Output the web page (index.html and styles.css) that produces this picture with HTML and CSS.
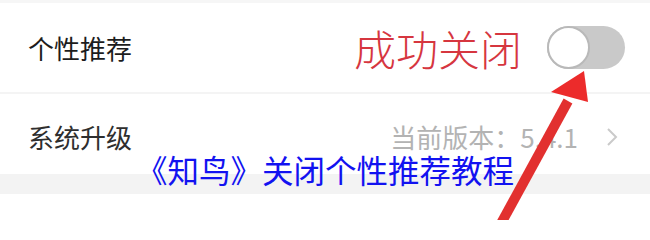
FILE: index.html
```html
<!DOCTYPE html>
<html lang="zh-CN">
<head>
<meta charset="utf-8">
<title>知鸟 关闭个性推荐</title>
<link rel="stylesheet" href="styles.css">
</head>
<body>
<div class="screen">
  <div class="row row-first">
    <span class="label">个性推荐</span>
    <div class="right">
      <span class="note">成功关闭</span>
      <span class="toggle"><span class="knob"></span></span>
    </div>
  </div>
  <div class="row row-second">
    <span class="label label-2">系统升级</span>
    <div class="right right-2">
      <span class="version">当前版本：5.4.1</span>
      <svg class="chevron" width="12" height="20" viewBox="0 0 12 20"><polyline points="2,2 10,10 2,18" fill="none" stroke="#cacaca" stroke-width="2"/></svg>
    </div>
  </div>
  <div class="band"></div>
  <div class="caption">《知鸟》关闭个性推荐教程</div>
  <svg class="arrow" width="650" height="220" viewBox="0 0 650 220">
    <line x1="568" y1="98" x2="498" y2="226" stroke="#e2302f" stroke-width="10"/>
    <polygon points="584,68 551,89 588,99" fill="#ec2b2b"/>
  </svg>
</div>
</body>
</html>
```

FILE: styles.css
```css
html, body {
  margin: 0;
  padding: 0;
  background: #ffffff;
}

.screen {
  position: relative;
  width: 650px;
  height: 220px;
  overflow: hidden;
  background: #ffffff;
  font-family: "Noto Sans CJK SC", "Noto Sans", sans-serif;
  border-top: 3px solid #f6f6f6;
  box-sizing: border-box;
}

.row {
  display: flex;
  align-items: center;
  justify-content: space-between;
  padding-left: 28px;
}

.row-first {
  height: 89px;
  padding-right: 25px;
  border-bottom: 2px solid #f4f4f4;
}

.row-second {
  height: 80px;
  padding-right: 32px;
  padding-top: 6px;
  box-sizing: border-box;
}

.label {
  font-size: 26px;
  color: #1c1c1c;
  line-height: 1;
}

.label-2 {
  color: #2e2e2e;
}

.right {
  display: flex;
  align-items: center;
  gap: 25px;
}

.right-2 {
  gap: 28px;
}

.note {
  font-size: 42px;
  line-height: 1;
  font-weight: 300;
  color: #d6363f;
}

.toggle {
  display: flex;
  align-items: center;
  width: 78px;
  height: 43px;
  border-radius: 22px;
  background: #c9c9c9;
}

.knob {
  width: 39px;
  height: 39px;
  border-radius: 50%;
  background: #ffffff;
  border: 2px solid #b9b9b9;
}

.version {
  font-size: 26px;
  line-height: 1;
  color: #b3b3b3;
}

.chevron {
  display: block;
}

.band {
  height: 20px;
  background: #f3f3f3;
}

.caption {
  position: absolute;
  left: 136px;
  top: 151px;
  font-size: 31.5px;
  line-height: 1;
  color: #1212f0;
  white-space: nowrap;
}

.arrow {
  position: absolute;
  left: 0;
  top: 0;
  pointer-events: none;
}
```
